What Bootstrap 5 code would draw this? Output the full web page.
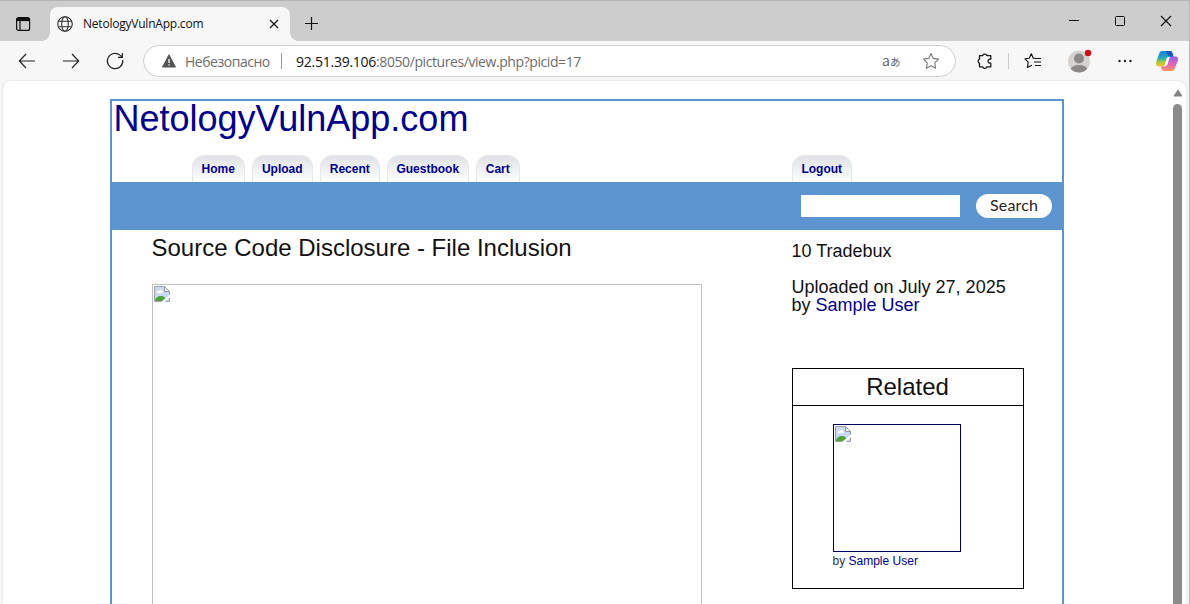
<!DOCTYPE html>
<html lang="en">
<head>
<meta charset="utf-8">
<meta name="viewport" content="width=device-width, initial-scale=1">
<title>NetologyVulnApp.com</title>
<link href="https://cdn.jsdelivr.net/npm/bootstrap@5.3.0/dist/css/bootstrap.min.css" rel="stylesheet">
<style>
body{font-family:"Liberation Sans",Arial,sans-serif;color:#111;background:#f7f7f7;height:604px}
svg{display:block;flex:none}
a{color:#00008b;text-decoration:none}
.chrome{font-family:"Open Sans","Noto Sans",sans-serif}
.win{width:1190px;height:604px;border-right:1px solid #b9b9b9}
.titlebar{height:41px;background:#cdcdcd;border-top:1px solid #b4b4b4;padding-left:15px}
.tabx{width:240px;height:34px;margin:6px 0 0 19px;background:#f7f7f7;border-radius:8px 8px 0 0;font-size:12px;color:#111;padding-left:7px}
.tabx::before,.tabx::after{content:"";position:absolute;bottom:0;width:8px;height:8px}
.tabx::before{left:-8px;background:radial-gradient(circle at 0 0,transparent 7.5px,#f7f7f7 8px)}
.tabx::after{right:-8px;background:radial-gradient(circle at 100% 0,transparent 7.5px,#f7f7f7 8px)}
.tabname{width:184px;margin-left:10px;letter-spacing:-.22px}
.tools{height:40px;padding-left:18px}
.address{width:813px;height:32px;margin-left:18px;border:1px solid #cfcfcf;border-radius:16px;background:#fff;font-size:14px;color:#6d6d6d}
.warn{width:86px;margin-left:9px;letter-spacing:-.48px}
.split{width:1px;height:16px;background:#9a9a9a}
.url{width:587px;letter-spacing:-.42px}
.url b{font-weight:400;color:#111;letter-spacing:-.25px}
.lang{width:20px;height:20px;color:#666;font:12px/18px "Noto Sans CJK JP",sans-serif}
.lang small{font-size:10.5px}
.view{height:523px;width:1183px;margin-left:3px;background:#fff;border-radius:8px 8px 0 0;box-shadow:0 0 2px #ccc}
.site{width:954px;height:520px;margin:18px 0 0 107px;border:2px solid #5c94cf;border-bottom:0}
.brandline{height:54px;font-size:36px;line-height:36px;padding-left:1.5px}
.menu{height:27px;padding-left:80px;gap:7px;font-size:12px;font-weight:700}
.menu a{height:27px;line-height:27px;text-align:center;border:1px solid #e6e8ea;border-bottom:0;border-radius:12px 12px 0 0;background:linear-gradient(#dfe1e4,#fff);padding-right:.5px}
.w-home{width:53px}.w-upload{width:61px}.w-recent{width:60px}.w-guest{width:82px}.w-cart{width:44px}.w-out{width:60px;margin-left:265px}
.band{height:48px;background:#5c94cf;padding-left:689px}
.field{width:159px;height:22px;border:0;border-radius:0;padding:0 4px;background:#fff}
.go{width:76px;height:24px;margin-left:16px;border:0;border-radius:12px;background:#fff;color:#2b2226;font:16px/22px Lato,sans-serif;padding:0 0 2px;letter-spacing:.15px}
.main-col{width:550px;margin-left:40px}
.main-col h1{font-size:24px;line-height:28px;margin:4px 0 22px -.5px;font-weight:400;white-space:nowrap}
.shot{height:330px;border:1px solid #c0c0c0;padding:1px}
.side{width:232px;margin-left:90px;font-size:18px;line-height:18px;white-space:nowrap}
.side p{margin-left:-.5px}
.related{height:221px;margin-top:54px;border:1px solid #000}
.related h2{font-size:24px;height:37px;line-height:36px;margin:0;font-weight:400;border-bottom:1px solid #000;padding-right:1px}
.thumb{width:128px;height:128px;margin:18px 0 0 40px;border:1px solid #00005c;padding:1px}
.by{font-size:12px;line-height:18px;margin-left:39.5px;color:#333}
.scroll{width:17px;padding-top:8px;gap:7px;right:0;top:0;bottom:0}
.bar{width:9px;background:#8b8b8b;border-radius:5px 5px 0 0}
</style>
</head>
<body class="overflow-hidden">
<svg width="0" height="0" class="position-absolute"><defs>
<symbol id="broken" viewBox="0 0 16 16"><path d="M.5.5h10l5 5v10H.5z" fill="#c7d9f4" stroke="#a0a0a0"/><path d="M10.500.5v5h5z" fill="#fff" stroke="#999"/><path d="M3 7c-.7-2 1-2.500 2-2 1-2 3-1 3 .3 1.500 0 1.500 1.700 0 1.700z" fill="#fff"/><path d="M1 15c0-3 3-5 6-5s5 2 6 5z" fill="#4fa33c"/><path d="M7 16l9-7.500v2.500L11 16z" fill="#fff"/></symbol>
</defs></svg>
<div class="win overflow-hidden">
 <header class="chrome">
  <div class="titlebar d-flex">
   <svg style="margin-top:15px" width="16" height="16" viewBox="0 0 16 16" fill="none" stroke="#111" stroke-width="1.200"><rect x="1.600" y="1.600" width="13" height="12.800" rx="2"/><path d="M2 3.500h12.300" stroke-width="3.200"/><path d="M5 5v9"/></svg>
   <div class="tabx d-flex align-items-center position-relative">
    <svg width="16" height="16" viewBox="0 0 16 16" fill="none" stroke="#333" stroke-width="1.100"><circle cx="8" cy="8" r="7.300"/><ellipse cx="8" cy="8" rx="3.300" ry="7.300"/><path d="M1.400 5.300h13.200M1.400 10.700h13.200"/></svg>
    <span class="tabname">NetologyVulnApp.com</span>
    <svg width="14" height="14" viewBox="0 0 14 14" stroke="#111" stroke-width="1.200"><path d="M3 3l8 8M11 3l-8 8"/></svg>
   </div>
   <svg style="margin:15px 0 0 14px" width="15" height="15" viewBox="0 0 15 15" stroke="#111" stroke-width="1.200"><path d="M7.500 1v13M1 7.500h13"/></svg>
   <div class="d-flex ms-auto" style="margin-top:12px;gap:30px;padding-right:15px">
    <svg width="16" height="16" viewBox="0 0 16 16" stroke="#111"><path d="M3 7.500h10"/></svg>
    <svg width="16" height="16" viewBox="0 0 16 16" fill="none" stroke="#111"><rect x="3.500" y="3.500" width="9" height="9" rx="1"/></svg>
    <svg width="16" height="16" viewBox="0 0 16 16" stroke="#111" stroke-width="1.100"><path d="M3 3l10 10M13 3L3 13"/></svg>
   </div>
  </div>
  <div class="tools d-flex align-items-center">
   <svg width="18" height="18" viewBox="0 0 18 18" fill="none" stroke="#222" stroke-width="1.150"><path d="M17 9H1.500M8 2L1.300 9 8 16"/></svg>
   <svg style="margin-left:26px" width="18" height="18" viewBox="0 0 18 18" fill="none" stroke="#222" stroke-width="1.150"><path d="M1 9h15.500M10 2l6.700 7L10 16"/></svg>
   <svg style="margin-left:25px" width="20" height="20" viewBox="0 0 20 20" fill="none" stroke="#222" stroke-width="1.200"><path d="M17.700 9A7.700 7.700 0 1 1 15 4.100l2.300 2M17.400 2v4.300h-4.400"/></svg>
   <div class="address d-flex align-items-center">
    <svg style="margin-left:18px" width="14" height="14" viewBox="0 0 14 14"><path d="M7 .8L13.500 13H.5z" fill="#555" stroke="#555" stroke-linejoin="round"/><path d="M7 5v4M7 10.300v1.300" stroke="#fff" stroke-width="1.300"/></svg>
    <span class="warn">Небезопасно</span>
    <i class="split" style="margin:0 14px 0 10px"></i>
    <span class="url"><b>92.51.39.106</b>:8050/pictures/view.php?picid=17</span>
    <span class="lang text-nowrap" style="margin-left:-1px"><span style="font-size:14px">a</span><small>あ</small></span>
    <svg style="margin-left:20px" width="18" height="18" viewBox="0 0 18 18" fill="none" stroke="#777" stroke-width="1.100" stroke-linejoin="round"><path d="M9 1.500l2.300 4.900 5.200.7-3.800 3.700.9 5.400L9 13.700l-4.600 2.500.9-5.400L1.500 7.100l5.200-.7z"/></svg>
   </div>
   <svg style="margin-left:20px" width="17" height="18" viewBox="0 0 17 18" fill="none" stroke="#111" stroke-width="1.250" stroke-linejoin="round"><path d="M3.500 3.700h3.200a2.100 2.100 0 0 1 4.100 0h4v3.500h-1.300a2.100 2.100 0 0 0 0 4h1.300v3.600h-4a2.100 2.100 0 0 1-4.100 0H3.500v-3.500a2.200 2.200 0 0 1 0-4.100z"/></svg>
   <i class="split" style="background:#ccc;margin-left:15px"></i>
   <svg style="margin-left:15px" width="18" height="18" viewBox="0 0 18 18" fill="none" stroke="#111" stroke-width="1.150" stroke-linejoin="round"><path d="M11 6.300L9.300 6.200 7.300 1.800 5.200 6.200 1 6.800l3.200 3.400-.8 5.200 4.500-2.200M11 6.500h6M10 10h7M11 13.500h6"/></svg>
   <svg style="margin-left:26px" width="26" height="24" viewBox="0 0 26 24"><defs><clipPath id="av"><circle cx="11" cy="12.500" r="11"/></clipPath></defs><g clip-path="url(#av)"><path d="M0 0h22v24H0z" fill="#d5d3d1"/><circle cx="11" cy="9.500" r="5" fill="#8b8986"/><ellipse cx="11" cy="21" rx="8.500" ry="5" fill="#8b8986"/></g><circle cx="20" cy="4" r="3.200" fill="#d50b14"/></svg>
   <svg style="margin-left:23px" width="16" height="6" viewBox="0 0 16 6" fill="#222"><circle cx="2.500" cy="3" r="1.200"/><circle cx="8" cy="3" r="1.200"/><circle cx="13.500" cy="3" r="1.200"/></svg>
   <svg style="margin-left:22px" width="24" height="22" viewBox="0 0 24 22"><defs><linearGradient id="ca" x2="0" y2="1"><stop stop-color="#1683dc"/><stop offset=".45" stop-color="#25a8bc"/><stop offset=".7" stop-color="#a5c742"/><stop offset="1" stop-color="#f5c52c"/></linearGradient><linearGradient id="cb" x2="0" y2="1"><stop stop-color="#8b61e8"/><stop offset=".5" stop-color="#dc62bd"/><stop offset="1" stop-color="#fb955c"/></linearGradient></defs><path d="M7 1h8c2 0 2.500 2 3 4l.6 2h-4c-2 0-2.500 1-3 3l-1.200 4c-.5 2-1.500 2.500-3 2.500H4C1 16.500.6 14 1.300 11.500L4 4c.7-2 1.500-3 3-3z" fill="url(#ca)"/><path d="M17 21H9c-2 0-2.500-2-3-4.500h3c2 0 3-1 3.500-3l1.200-4C14.200 7.500 15 6.500 17 6.500h3c3 0 3.500 2 2.700 4.500L20 18c-.7 2-1.500 3-3 3z" fill="url(#cb)"/><path d="M11 1h4c2 0 2.500 2 3 4l.5 1.500h-3.500C13 6 12 4 11 1z" fill="#1d55bb"/><path d="M12.300 7.200h3c-1 .8-1.200 1.700-1.500 2.700l-1.200 4c-.3 1-.9 1.500-2 1.500H9c.8-.7 1-1.400 1.300-2.400l1.200-4c.2-.8.400-1.400.8-1.800z" fill="#f7f7f7"/></svg>
  </div>
 </header>
 <div class="view position-relative d-flex">
  <main class="site">
   <div class="brandline"><a href="#">NetologyVulnApp.com</a></div>
   <nav class="menu d-flex"><a href="#" class="w-home">Home</a><a href="#" class="w-upload">Upload</a><a href="#" class="w-recent">Recent</a><a href="#" class="w-guest">Guestbook</a><a href="#" class="w-cart">Cart</a><a href="#" class="w-out">Logout</a></nav>
   <form class="band d-flex align-items-center"><input class="field" aria-label="Search"><button type="button" class="go">Search</button></form>
   <div class="d-flex">
    <section class="main-col"><h1>Source Code Disclosure - File Inclusion</h1><div class="shot"><svg width="16" height="16"><use href="#broken"/></svg></div></section>
    <aside class="side">
     <p style="margin-top:12px;margin-bottom:18px">10 Tradebux</p>
     <p class="mb-0">Uploaded on July 27, 2025<br>by <a href="#">Sample User</a></p>
     <div class="related"><h2 class="text-center">Related</h2><div class="thumb"><svg width="16" height="16"><use href="#broken"/></svg></div><div class="by">by <a href="#">Sample User</a></div></div>
    </aside>
   </div>
  </main>
  <div class="scroll position-absolute d-flex flex-column align-items-center"><svg width="10" height="8" viewBox="0 0 10 8"><path d="M5 1l4 6H1z" fill="#858585" stroke="#858585" stroke-linejoin="round"/></svg><div class="bar flex-fill"></div></div>
 </div>
</div>
<script src="https://cdn.jsdelivr.net/npm/bootstrap@5.3.0/dist/js/bootstrap.bundle.min.js"></script>
</body>
</html>
